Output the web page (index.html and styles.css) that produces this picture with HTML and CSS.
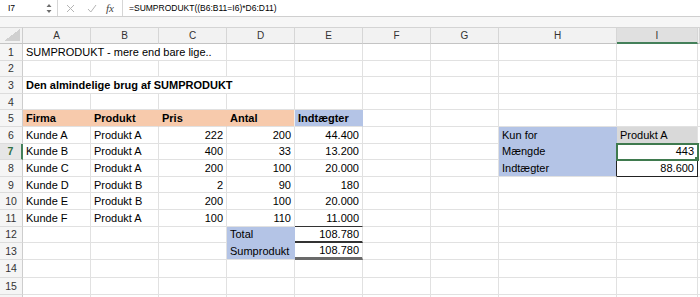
FILE: index.html
```html
<!DOCTYPE html>
<html lang="da">
<head>
    <meta charset="UTF-8">
    <meta name="viewport" content="width=device-width, initial-scale=1.0">
    <title>SUMPRODUKT</title>
    <link rel="stylesheet" href="styles.css">
</head>
<body>
    <div class="formula-bar">
        <div class="name-box">I7</div>
        <div class="spinner">
            <svg width="6" height="11" viewBox="0 0 6 11"><path d="M3 1 L5.5 4 L0.5 4 Z M3 10 L5.5 7 L0.5 7 Z" fill="#6e6e6e"/></svg>
        </div>
        <div class="fb-tools">
            <svg class="fb-cancel" width="9" height="9" viewBox="0 0 9 9"><path d="M1 1 L8 8 M8 1 L1 8" stroke="#b4b4b4" stroke-width="1" fill="none"/></svg>
            <svg class="fb-enter" width="10" height="9" viewBox="0 0 10 9"><path d="M1 5 L3.8 8 L9 1" stroke="#b4b4b4" stroke-width="1" fill="none"/></svg>
            <span class="fx">fx</span>
        </div>
        <div class="formula">=SUMPRODUKT((B6:B11=I6)*D6:D11)</div>
    </div>
    <div class="band"></div>

    <div class="sheet">
        <div class="row head">
            <div class="corner"></div>
            <div class="ch">A</div>
            <div class="ch">B</div>
            <div class="ch">C</div>
            <div class="ch">D</div>
            <div class="ch">E</div>
            <div class="ch">F</div>
            <div class="ch">G</div>
            <div class="ch">H</div>
            <div class="ch sel">I</div>
            <div class="ch"></div>
        </div>

        <div class="row">
            <div class="rh">1</div>
            <div class="c span3">SUMPRODUKT - mere end bare lige..</div>
            <div class="c"></div><div class="c"></div><div class="c"></div><div class="c"></div>
            <div class="c"></div><div class="c"></div><div class="c"></div>
        </div>
        <div class="row">
            <div class="rh">2</div>
            <div class="c"></div><div class="c"></div><div class="c"></div><div class="c"></div><div class="c"></div>
            <div class="c"></div><div class="c"></div><div class="c"></div><div class="c"></div><div class="c"></div>
        </div>
        <div class="row">
            <div class="rh">3</div>
            <div class="c span4 b">Den almindelige brug af SUMPRODUKT</div>
            <div class="c"></div><div class="c"></div><div class="c"></div>
            <div class="c"></div><div class="c"></div><div class="c"></div>
        </div>
        <div class="row">
            <div class="rh">4</div>
            <div class="c"></div><div class="c"></div><div class="c"></div><div class="c"></div><div class="c"></div>
            <div class="c"></div><div class="c"></div><div class="c"></div><div class="c"></div><div class="c"></div>
        </div>
        <div class="row">
            <div class="rh">5</div>
            <div class="c peach b">Firma</div>
            <div class="c peach b">Produkt</div>
            <div class="c peach b">Pris</div>
            <div class="c peach last b">Antal</div>
            <div class="c blue b">Indtægter</div>
            <div class="c"></div><div class="c"></div><div class="c"></div><div class="c"></div><div class="c"></div>
        </div>
        <div class="row">
            <div class="rh">6</div>
            <div class="c">Kunde A</div>
            <div class="c">Produkt A</div>
            <div class="c num">222</div>
            <div class="c num">200</div>
            <div class="c num">44.400</div>
            <div class="c"></div><div class="c"></div>
            <div class="c blue stack">Kun for</div>
            <div class="c gray">Produkt A</div>
            <div class="c"></div>
        </div>
        <div class="row">
            <div class="rh sel">7</div>
            <div class="c">Kunde B</div>
            <div class="c">Produkt A</div>
            <div class="c num">400</div>
            <div class="c num">33</div>
            <div class="c num">13.200</div>
            <div class="c"></div><div class="c"></div>
            <div class="c blue stack">Mængde</div>
            <div class="c num active">443</div>
            <div class="c"></div>
        </div>
        <div class="row">
            <div class="rh">8</div>
            <div class="c">Kunde C</div>
            <div class="c">Produkt A</div>
            <div class="c num">200</div>
            <div class="c num">100</div>
            <div class="c num">20.000</div>
            <div class="c"></div><div class="c"></div>
            <div class="c blue boxed-left">Indtægter</div>
            <div class="c num boxed">88.600</div>
            <div class="c"></div>
        </div>
        <div class="row">
            <div class="rh">9</div>
            <div class="c">Kunde D</div>
            <div class="c">Produkt B</div>
            <div class="c num">2</div>
            <div class="c num">90</div>
            <div class="c num">180</div>
            <div class="c"></div><div class="c"></div><div class="c"></div><div class="c"></div><div class="c"></div>
        </div>
        <div class="row">
            <div class="rh">10</div>
            <div class="c">Kunde E</div>
            <div class="c">Produkt B</div>
            <div class="c num">200</div>
            <div class="c num">100</div>
            <div class="c num">20.000</div>
            <div class="c"></div><div class="c"></div><div class="c"></div><div class="c"></div><div class="c"></div>
        </div>
        <div class="row">
            <div class="rh">11</div>
            <div class="c">Kunde F</div>
            <div class="c">Produkt A</div>
            <div class="c num">100</div>
            <div class="c num">110</div>
            <div class="c num above-total">11.000</div>
            <div class="c"></div><div class="c"></div><div class="c"></div><div class="c"></div><div class="c"></div>
        </div>
        <div class="row">
            <div class="rh">12</div>
            <div class="c"></div><div class="c"></div><div class="c"></div>
            <div class="c blue stack">Total</div>
            <div class="c num total">108.780</div>
            <div class="c"></div><div class="c"></div><div class="c"></div><div class="c"></div><div class="c"></div>
        </div>
        <div class="row">
            <div class="rh">13</div>
            <div class="c"></div><div class="c"></div><div class="c"></div>
            <div class="c blue">Sumprodukt</div>
            <div class="c num total last">108.780</div>
            <div class="c"></div><div class="c"></div><div class="c"></div><div class="c"></div><div class="c"></div>
        </div>
        <div class="row r14">
            <div class="rh">14</div>
            <div class="c"></div><div class="c"></div><div class="c"></div><div class="c"></div><div class="c"></div>
            <div class="c"></div><div class="c"></div><div class="c"></div><div class="c"></div><div class="c"></div>
        </div>
        <div class="row r15">
            <div class="rh">15</div>
            <div class="c"></div><div class="c"></div><div class="c"></div><div class="c"></div><div class="c"></div>
            <div class="c"></div><div class="c"></div><div class="c"></div><div class="c"></div><div class="c"></div>
        </div>
        <div class="row">
            <div class="rh"></div>
            <div class="c"></div><div class="c"></div><div class="c"></div><div class="c"></div><div class="c"></div>
            <div class="c"></div><div class="c"></div><div class="c"></div><div class="c"></div><div class="c"></div>
        </div>
    </div>
</body>
</html>
```

FILE: styles.css
```css
body {
    margin: 0;
    font-family: "Liberation Sans", Arial, sans-serif;
    color: #000;
    background: #fff;
    overflow: hidden;
}

/* formula bar */
.formula-bar {
    display: flex;
    align-items: center;
    height: 17px;
    box-sizing: border-box;
    border-bottom: 1px solid #cfcfcf;
    font-size: 8.5px;
}
.name-box {
    width: 38px;
    padding-left: 8px;
}
.spinner {
    width: 11px;
    height: 100%;
    display: flex;
    align-items: center;
    border-right: 1px solid #d6d6d6;
}
.fb-tools {
    display: flex;
    align-items: center;
    width: 64px;
    height: 100%;
    border-right: 1px solid #d6d6d6;
}
.fb-cancel {
    margin-left: 8px;
}
.fb-enter {
    margin-left: 12px;
}
.fx {
    margin-left: 9px;
    font-family: "Liberation Serif", serif;
    font-style: italic;
    font-size: 11px;
    color: #444;
}
.formula {
    padding-left: 6px;
}
.band {
    height: 10px;
    background: #f6f6f6;
}

/* sheet grid */
.row {
    display: grid;
    grid-template-columns: 23px repeat(7, 68px) 118px 81px 1fr;
    height: 16.6px;
}
.row.head {
    height: 17px;
    background: #f2f2f2;
}
.row.r14 {
    height: 18px;
}
.row.r15 {
    height: 17.5px;
}
.corner {
    border-top: 1px solid #d4d4d4;
    border-right: 1px solid #cdcdcd;
    border-bottom: 1px solid #c4c4c4;
    background: linear-gradient(to top left, #d0d0d0 50%, transparent 50%) no-repeat right 2px bottom 2px / 16px 12px;
}
.ch {
    display: flex;
    align-items: center;
    justify-content: center;
    border-top: 1px solid #d4d4d4;
    border-right: 1px solid #d6d6d6;
    border-bottom: 1px solid #c4c4c4;
    font-size: 10px;
    color: #333;
}
.ch.sel {
    background: #e0e0e0;
    border-bottom: 2px solid #44805a;
}
.rh {
    display: flex;
    align-items: center;
    justify-content: center;
    background: #f5f5f5;
    border-right: 1px solid #cdcdcd;
    border-bottom: 1px solid #dcdcdc;
    font-size: 10.5px;
    color: #333;
}
.rh.sel {
    color: #2f6e43;
    font-weight: bold;
    background: #e6e6e6;
    border-right: 2px solid #44805a;
}
.c {
    display: flex;
    align-items: center;
    box-sizing: border-box;
    padding: 0 3px;
    border-right: 1px solid #e1e1e1;
    border-bottom: 1px solid #e1e1e1;
    font-size: 11px;
    white-space: nowrap;
    overflow: hidden;
}
.c.span3 {
    grid-column: span 3;
}
.c.span4 {
    grid-column: span 4;
}
.b {
    font-weight: bold;
}
.num {
    justify-content: flex-end;
}

/* fills */
.peach {
    background: #f7caac;
    border-right-color: #f7caac;
}
.peach.last {
    border-right-color: #eeeeee;
}
.blue {
    background: #b4c4e6;
    border-right-color: #b4c4e6;
}
.blue.stack {
    border-bottom-color: #b4c4e6;
}
.gray {
    background: #d9d9d9;
}

/* borders */
.active {
    position: relative;
    z-index: 1;
    outline: 2px solid #3f7a4e;
    outline-offset: -1px;
}
.active::after {
    content: "";
    position: absolute;
    right: -3px;
    bottom: -3px;
    width: 4px;
    height: 4px;
    background: #3f7a4e;
    border: 1px solid #fff;
}
.boxed-left {
    border-right-color: #222;
}
.boxed {
    border-right-color: #222;
    border-bottom-color: #222;
}
.above-total {
    border-bottom-color: #333;
}
.total {
    border-bottom: 2px solid #333;
}
.total.last {
    border-bottom: 3px solid #6a6a6a;
}
```
